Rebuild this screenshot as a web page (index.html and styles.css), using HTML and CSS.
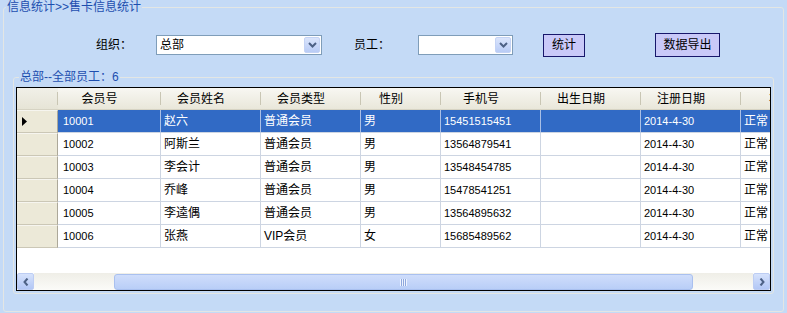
FILE: index.html
```html
<!DOCTYPE html>
<html lang="zh-CN">
<head>
    <meta charset="UTF-8">
    <title>售卡信息统计</title>
    <link rel="stylesheet" href="styles.css">
</head>
<body>
<fieldset class="panel">
    <legend class="title">信息统计&gt;&gt;售卡信息统计</legend>

    <div class="toolbar">
        <span class="lbl lbl-org">组织：</span>
        <div class="combo combo-org">
            <span class="combo-text">总部</span>
            <span class="combo-btn">
                <svg width="9" height="6" viewBox="0 0 9 6"><path d="M1 1 L4.5 4.5 L8 1" fill="none" stroke="#4d6185" stroke-width="2"/></svg>
            </span>
        </div>
        <span class="lbl lbl-emp">员工：</span>
        <div class="combo combo-emp">
            <span class="combo-text"></span>
            <span class="combo-btn">
                <svg width="9" height="6" viewBox="0 0 9 6"><path d="M1 1 L4.5 4.5 L8 1" fill="none" stroke="#4d6185" stroke-width="2"/></svg>
            </span>
        </div>
        <button class="btn btn-stat">统计</button>
        <button class="btn btn-export">数据导出</button>
    </div>

    <fieldset class="group">
        <legend class="title">总部--全部员工：6</legend>
        <div class="grid">
            <div class="grid-view">
                <table class="data">
                    <colgroup>
                        <col style="width:41px">
                        <col style="width:103px">
                        <col style="width:100px">
                        <col style="width:100px">
                        <col style="width:80px">
                        <col style="width:100px">
                        <col style="width:100px">
                        <col style="width:100px">
                        <col style="width:100px">
                    </colgroup>
                    <thead>
                    <tr>
                        <th class="corner"></th>
                        <th>会员号</th>
                        <th>会员姓名</th>
                        <th>会员类型</th>
                        <th>性别</th>
                        <th>手机号</th>
                        <th>出生日期</th>
                        <th>注册日期</th>
                        <th>状态</th>
                    </tr>
                    </thead>
                    <tbody>
                    <tr class="sel">
                        <td class="rh"><svg width="5" height="9" viewBox="0 0 5 9"><path d="M0 0 L5 4.5 L0 9 Z" fill="#000"/></svg></td>
                        <td class="n first">10001</td><td>赵六</td><td>普通会员</td><td>男</td>
                        <td class="n">15451515451</td><td></td><td class="n">2014-4-30</td><td>正常</td>
                    </tr>
                    <tr>
                        <td class="rh"></td>
                        <td class="n first">10002</td><td>阿斯兰</td><td>普通会员</td><td>男</td>
                        <td class="n">13564879541</td><td></td><td class="n">2014-4-30</td><td>正常</td>
                    </tr>
                    <tr>
                        <td class="rh"></td>
                        <td class="n first">10003</td><td>李会计</td><td>普通会员</td><td>男</td>
                        <td class="n">13548454785</td><td></td><td class="n">2014-4-30</td><td>正常</td>
                    </tr>
                    <tr>
                        <td class="rh"></td>
                        <td class="n first">10004</td><td>乔峰</td><td>普通会员</td><td>男</td>
                        <td class="n">15478541251</td><td></td><td class="n">2014-4-30</td><td>正常</td>
                    </tr>
                    <tr>
                        <td class="rh"></td>
                        <td class="n first">10005</td><td>李逵偶</td><td>普通会员</td><td>男</td>
                        <td class="n">13564895632</td><td></td><td class="n">2014-4-30</td><td>正常</td>
                    </tr>
                    <tr>
                        <td class="rh"></td>
                        <td class="n first">10006</td><td>张燕</td><td>VIP会员</td><td>女</td>
                        <td class="n">15685489562</td><td></td><td class="n">2014-4-30</td><td>正常</td>
                    </tr>
                    </tbody>
                </table>
            </div>
            <div class="hscroll">
                <span class="sb-btn">
                    <svg width="6" height="8" viewBox="0 0 6 8"><path d="M4.5 0.5 L1.5 4 L4.5 7.5" fill="none" stroke="#4d6185" stroke-width="2"/></svg>
                </span>
                <div class="sb-track">
                    <div class="sb-thumb"><span class="sb-grip"></span></div>
                </div>
                <span class="sb-btn">
                    <svg width="6" height="8" viewBox="0 0 6 8"><path d="M1.5 0.5 L4.5 4 L1.5 7.5" fill="none" stroke="#4d6185" stroke-width="2"/></svg>
                </span>
            </div>
        </div>
    </fieldset>
</fieldset>
</body>
</html>
```

FILE: styles.css
```css
/* 页面 */
body {
    margin: 0;
    height: 313px;
    overflow: hidden;
    background: #c4daf6;
    color: #000;
    font-family: "Liberation Sans", "Noto Sans CJK SC", sans-serif;
    font-size: 12px;
}

/* 分组框 */
.panel {
    margin: 0 3px;
    padding: 0;
    border: 1px solid #e3e6e4;
    border-radius: 3px;
    min-width: 0;
}

.title {
    margin-left: 2px;
    padding: 0 1px;
    color: #1d4eaf;
    line-height: 14px;
}

.group {
    margin: 13px 9px 17px;
    padding: 0 2px 2px;
    border: 1px solid #e3e6e4;
    border-radius: 3px;
    min-width: 0;
}

.group .title {
    margin-left: 3px;
}

/* 查询条件 */
.toolbar {
    display: flex;
    align-items: center;
    height: 24px;
    margin-top: 19px;
}

.lbl {
    width: 36px;
    line-height: 16px;
    white-space: nowrap;
}

.lbl-org {
    margin-left: 92px;
}

.lbl-emp {
    margin-left: 32px;
}

.combo {
    display: flex;
    align-items: center;
    box-sizing: border-box;
    height: 20px;
    border: 1px solid #7f9db9;
    background: #fff;
}

.combo-org {
    margin-left: 24px;
    width: 166px;
}

.combo-emp {
    margin-left: 28px;
    width: 95px;
}

.combo-text {
    padding-left: 3px;
    line-height: 16px;
}

.combo-btn {
    display: flex;
    align-items: center;
    justify-content: center;
    box-sizing: border-box;
    width: 16px;
    height: 16px;
    margin: 0 1px 0 auto;
    border: 1px solid #c4d3f5;
    border-radius: 2px;
    background: linear-gradient(#dbe5fc, #b9ccf6);
}

.btn {
    box-sizing: border-box;
    padding: 0;
    border: 1px solid #17176b;
    background: #c9c9f8;
    color: #000;
    font-family: inherit;
    font-size: 12px;
    line-height: 16px;
}

.btn-stat {
    margin-left: 30px;
    width: 42px;
    height: 23px;
}

.btn-export {
    margin-left: 70px;
    width: 65px;
    height: 24px;
}

/* 数据表格 */
.grid {
    display: flex;
    flex-direction: column;
    box-sizing: border-box;
    height: 204px;
    margin-top: 3px;
    border: 1px solid #000;
    background: #fff;
}

.grid-view {
    flex: 1;
    overflow: hidden;
}

.data {
    table-layout: fixed;
    width: 824px;
    border-collapse: separate;
    border-spacing: 0;
}

.data th {
    height: 21px;
    padding: 0 20px 0 0;
    border-bottom: 1px solid #d6d3c3;
    background: linear-gradient(#c9c6b4, #c9c6b4) right 4px / 1px 13px no-repeat,
                linear-gradient(#f8f7f2, #e9e7da);
    font-weight: normal;
    line-height: 20px;
    text-align: center;
    white-space: nowrap;
    overflow: hidden;
}

.data th.corner {
    padding: 0;
    background: linear-gradient(#c9c6b4, #c9c6b4) right 4px / 1px 13px no-repeat,
                linear-gradient(#f1f0e8, #e6e4d6);
}

.data td {
    padding: 0 3px;
    border-right: 1px solid #cdd5e2;
    border-bottom: 1px solid #cdd5e2;
    line-height: 22px;
    white-space: nowrap;
    overflow: hidden;
}

.data td.first {
    padding-left: 5px;
}

.data td.n {
    font-size: 11px;
}

.data td.rh {
    padding: 0 0 0 5px;
    border-top: 1px solid #f6f5ef;
    border-right: 1px solid #aca899;
    border-bottom: 1px solid #cbc7b6;
    background: #ece9d8;
    line-height: 0;
    vertical-align: middle;
}

.data tr.sel td:not(.rh) {
    background: #316ac5;
    color: #fff;
    border-right-color: #a9bfe6;
}

/* 水平滚动条 */
.hscroll {
    display: flex;
    height: 17px;
}

.sb-btn {
    display: flex;
    align-items: center;
    justify-content: center;
    box-sizing: border-box;
    width: 17px;
    height: 17px;
    border: 1px solid #bdcdf3;
    border-radius: 2px;
    background: linear-gradient(#d6e2fc, #b2c7f5);
}

.sb-track {
    flex: 1;
    display: flex;
    background: linear-gradient(#efeee7, #fbfbf8);
}

.sb-thumb {
    display: flex;
    align-items: center;
    justify-content: center;
    box-sizing: border-box;
    width: 579px;
    height: 16px;
    margin: 1px 0 0 80px;
    border: 1px solid #a9c0ef;
    border-radius: 3px;
    background: linear-gradient(#cfddfb, #b9cef7);
}

.sb-grip {
    width: 7px;
    height: 7px;
    background: repeating-linear-gradient(to right, #eef3fe 0 1px, #8ea8dd 1px 2px);
}
```
